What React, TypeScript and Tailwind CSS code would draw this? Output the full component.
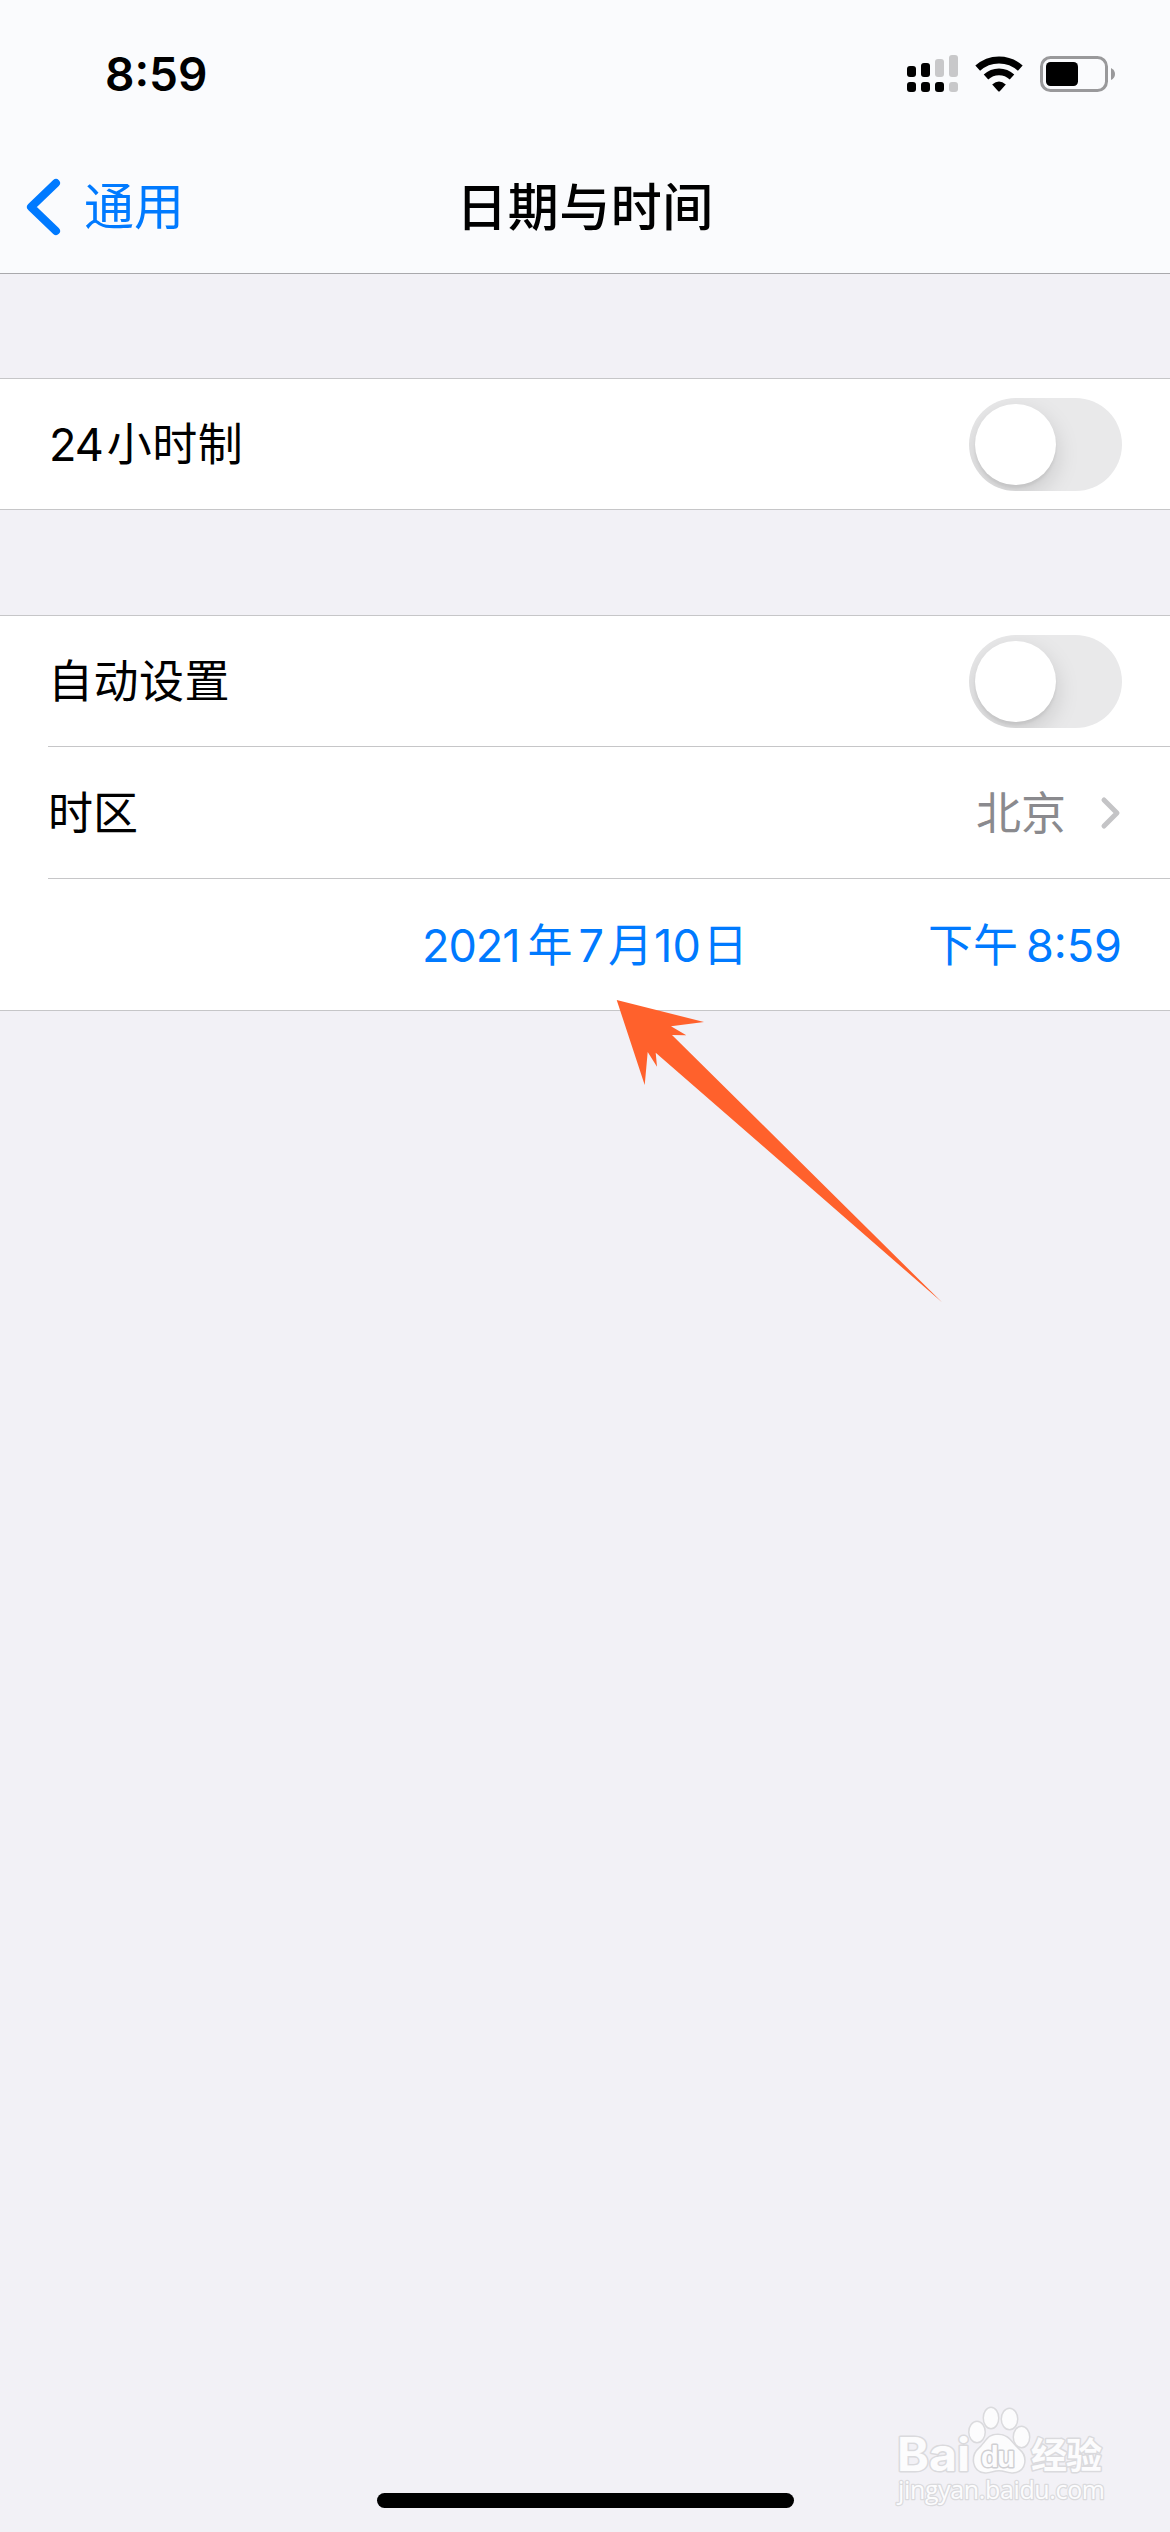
import type { ReactNode } from "react";
import clsx from "clsx";

function SignalIcon() {
  return (
    <svg width="52" height="38" viewBox="0 0 52 38" className="shrink-0">
      <rect x="0" y="11" width="9" height="11" rx="3" fill="#000" />
      <rect x="14" y="8" width="9" height="14" rx="3" fill="#000" />
      <rect x="28" y="4" width="9" height="18" rx="3" fill="#c8c8ca" />
      <rect x="42" y="0" width="9" height="22" rx="3" fill="#c8c8ca" />
      <rect x="0" y="27" width="9" height="10" rx="3" fill="#000" />
      <rect x="14" y="27" width="9" height="10" rx="3" fill="#000" />
      <rect x="28" y="27" width="9" height="10" rx="3" fill="#000" />
      <rect x="42" y="27" width="9" height="10" rx="3" fill="#c8c8ca" />
    </svg>
  );
}

function WifiIcon() {
  return (
    <svg width="50" height="38" viewBox="0 0 50 38" className="shrink-0">
      <path d="M2.7 13.2A31.5 31.5 0 0 1 45.3 13.2" fill="none" stroke="#000" strokeWidth="7" />
      <path d="M11 22A19 19 0 0 1 37 22" fill="none" stroke="#000" strokeWidth="6.6" />
      <path d="M17.2 29.6Q24 23.6 30.8 29.6L25 36Q24 37 23 36Z" fill="#000" />
    </svg>
  );
}

function BatteryIcon() {
  return (
    <svg width="76" height="36" viewBox="0 0 76 36" className="shrink-0">
      <rect x="1.5" y="1.5" width="65" height="33" rx="9" fill="none" stroke="#99999b" strokeWidth="3" />
      <rect x="6" y="6" width="32" height="24" rx="4.5" fill="#000" />
      <path d="M71 12Q75 14 75 18T71 24Z" fill="#99999b" />
    </svg>
  );
}

function Toggle() {
  return (
    <div className="h-[93px] w-[153px] shrink-0 overflow-hidden rounded-full bg-[#e9e9ea] p-1.5">
      <div className="size-[81px] rounded-full bg-white shadow-[0_9px_24px_rgba(0,0,0,0.15),0_3px_3px_rgba(0,0,0,0.06)]" />
    </div>
  );
}

function Row({ children, className }: { children: ReactNode; className?: string }) {
  return <div className={clsx("flex items-center pr-12 text-[45px] leading-none", className)}>{children}</div>;
}

function PointerArrow() {
  return (
    <svg width="330" height="306" viewBox="0 0 330 306" className="absolute left-[614px] top-[998px]">
      <path
        d="M2.7 2L90 24L57 28.3L72.3 37.3L58 37L328 304.3L41.7 54.7L43 68.7L33.7 54L30.7 87Z"
        fill="#ff612c"
      />
    </svg>
  );
}

function Watermark() {
  return (
    <svg
      width="230"
      height="110"
      viewBox="0 0 230 110"
      className="absolute left-[890px] top-[2400px]"
      fill="#fcfcfd"
      stroke="#dadadd"
      strokeWidth="3"
      strokeLinejoin="round"
      paintOrder="stroke"
    >
      <text
        x="7"
        y="71"
        textLength="73"
        lengthAdjust="spacingAndGlyphs"
        className="font-['Inter',sans-serif] text-[46px] font-bold"
      >
        Bai
      </text>
      <ellipse cx="87" cy="32" rx="7.5" ry="10" />
      <ellipse cx="101" cy="18" rx="7" ry="10" />
      <ellipse cx="119.5" cy="19" rx="7.5" ry="10" />
      <ellipse cx="131.5" cy="37" rx="7.5" ry="10" />
      <path d="M108 35C97 35 97 42 89 49C81 56 83 71 94 72C100 73 103 70 109 70C115 70 118 73 124 72C136 71 137 56 129 50C121 43 119 35 108 35Z" />
      <text
        x="91"
        y="67"
        textLength="34"
        stroke="#d0d0d3"
        className="font-['Liberation_Sans',sans-serif] text-[29px] font-bold"
      >
        du
      </text>
      <text x="141" y="69" textLength="71" className="font-['Noto_Sans_CJK_SC',sans-serif] text-[36px] font-bold">
        经验
      </text>
      <text x="8" y="99" textLength="207" strokeWidth="2.5" className="font-['Open_Sans',sans-serif] text-[25px]">
        jingyan.baidu.com
      </text>
    </svg>
  );
}

export default function App() {
  return (
    <div className="relative flex h-[2532px] w-[1170px] flex-col overflow-hidden bg-[#f2f1f6] font-['Inter','Noto_Sans_CJK_SC',sans-serif] text-black">
      <header className="flex h-[274px] shrink-0 flex-col border-b border-[#a9a9ac] bg-[#fafbfd]">
        {/* Status bar */}
        <div className="flex h-[148px] items-center pl-[105px] pr-[54px]">
          <span className="text-[46px] font-semibold leading-none">8:59</span>
          <div className="ml-auto flex items-center">
            <SignalIcon />
            <div className="ml-4">
              <WifiIcon />
            </div>
            <div className="ml-[15px]">
              <BatteryIcon />
            </div>
          </div>
        </div>

        {/* Navigation bar */}
        <nav className="grid h-[118px] grid-cols-3 items-center leading-none">
          <button className="flex items-center pl-[26px] text-[#007aff]">
            <svg width="36" height="58" viewBox="0 0 36 58">
              <path
                d="M30 5L5 29L30 53"
                fill="none"
                stroke="currentColor"
                strokeWidth="8"
                strokeLinecap="round"
                strokeLinejoin="round"
              />
            </svg>
            <span className="ml-[22px] text-[50px]">通用</span>
          </button>
          <h1 className="text-center text-[51px] font-medium tracking-[0.5px]">日期与时间</h1>
        </nav>
      </header>

      <section className="mt-[104px] shrink-0 border-y border-[#c6c6c8] bg-white pl-12">
        <Row className="h-[130px]">
          <span className="ml-px tracking-[-1px]">24</span>
          <span className="ml-1 tracking-[0.5px]">小时制</span>
          <div className="ml-auto">
            <Toggle />
          </div>
        </Row>
      </section>

      <section className="mt-[105px] shrink-0 border-y border-[#c6c6c8] bg-white pl-12">
        <Row className="h-[131px] border-b border-[#c6c6c8]">
          <span className="tracking-[0.5px]">自动设置</span>
          <div className="ml-auto">
            <Toggle />
          </div>
        </Row>
        <Row className="h-[132px] border-b border-[#c6c6c8]">
          <span className="pt-0.5">时区</span>
          <span className="ml-auto pt-0.5 text-[#8a8a8e]">北京</span>
          <svg width="24" height="36" viewBox="0 0 24 36" className="ml-8">
            <path
              d="M6 5L19 18L6 31"
              fill="none"
              stroke="#c4c4c6"
              strokeWidth="5"
              strokeLinecap="round"
              strokeLinejoin="round"
            />
          </svg>
        </Row>
        <Row className="h-[131px] pt-0.5 text-[#007aff]">
          <div className="ml-[374px] flex items-center">
            <span className="tracking-[-1px]">2021</span>
            <span className="ml-2">年</span>
            <span className="ml-1.5">7</span>
            <span className="ml-1">月</span>
            <span className="ml-px">10</span>
            <span className="ml-0.5">日</span>
          </div>
          <div className="ml-auto flex items-center gap-2">
            <span>下午</span>
            <span>8:59</span>
          </div>
        </Row>
      </section>

      {/* Home indicator */}
      <div className="mx-auto mb-6 mt-auto h-[15px] w-[417px] shrink-0 rounded-full bg-black" />

      <PointerArrow />
      <Watermark />
    </div>
  );
}
